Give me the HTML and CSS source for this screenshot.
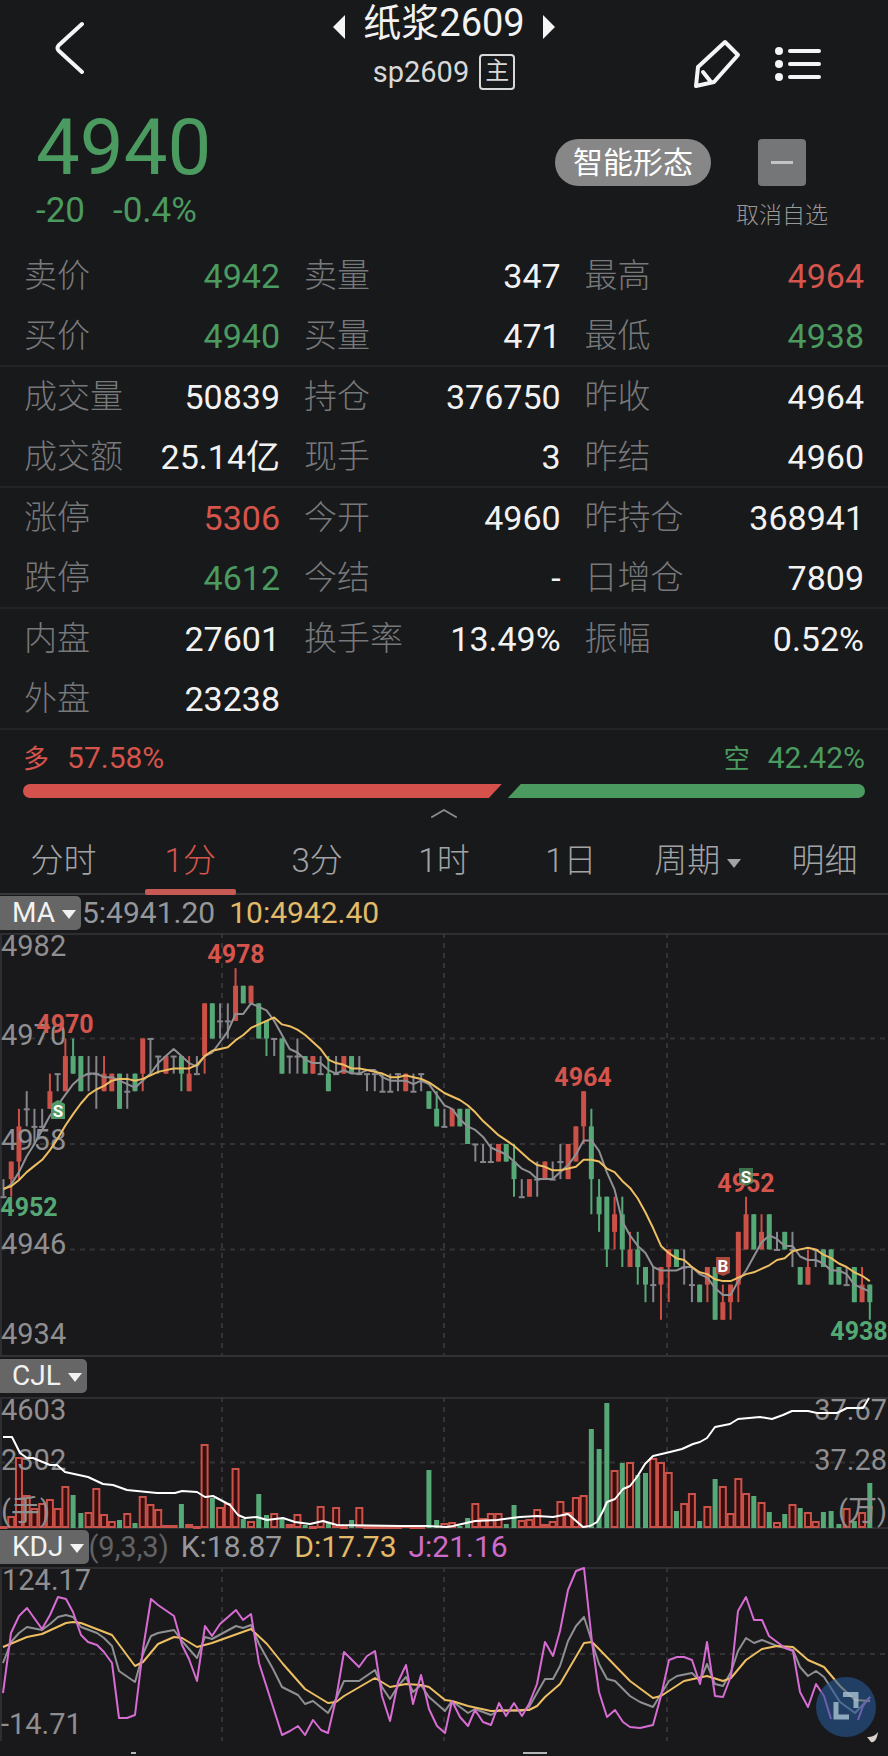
FILE: index.html
```html
<!DOCTYPE html>
<html lang="zh-CN">

<head>
	<meta charset="UTF-8">
	<meta name="viewport" content="width=device-width, initial-scale=1">
	<title>纸浆2609</title>
	<link rel="stylesheet" href="styles.css">
</head>

<body>
	<header class="topbar">
		<button class="icon-btn back" type="button" aria-label="返回">
			<svg width="30" height="54" viewBox="0 0 30 54"><path d="M27 3 3.500 24.500Q1.500 27 3.500 29.500L27 51" /></svg>
		</button>
		<div class="heading">
			<div class="heading-row">
				<button class="icon-btn" type="button" aria-label="上一个"><svg class="solid" width="12" height="24" viewBox="0 0 12 24"><path d="M12 0v24L0 12z" /></svg></button>
				<h1>纸浆2609</h1>
				<button class="icon-btn" type="button" aria-label="下一个"><svg class="solid" width="12" height="24" viewBox="0 0 12 24"><path d="M0 0v24l12-12z" /></svg></button>
			</div>
			<div class="code">sp2609 <span class="main-tag">主</span></div>
		</div>
		<div class="tools">
			<button class="icon-btn" type="button" aria-label="画线">
				<svg width="48" height="50" viewBox="0 0 48 50"><path d="M32 3 45 16 21 43 3 47 5 28zM10 33l8 10" /></svg>
			</button>
			<button class="icon-btn" type="button" aria-label="列表">
				<svg width="46" height="36" viewBox="0 0 46 36"><path d="M15 5h29M15 18h29M15 31h29" /><g class="dots"><circle cx="4" cy="5" r="4" /><circle cx="4" cy="18" r="4" /><circle cx="4" cy="31" r="4" /></g></svg>
			</button>
		</div>
	</header>

	<section class="quote">
		<div>
			<div class="price">4940</div>
			<div class="change"><span>-20</span><span>-0.4%</span></div>
		</div>
		<div class="quote-actions">
			<button class="pill" type="button">智能形态</button>
			<button class="watch" type="button"><span class="watch-box"></span>取消自选</button>
		</div>
	</section>

	<table class="stats">
		<colgroup>
			<col class="c1"><col class="c2"><col class="c3"><col class="c4"><col class="c5"><col class="c6">
		</colgroup>
		<tbody>
			<tr><th>卖价</th><td class="down">4942</td><th>卖量</th><td>347</td><th>最高</th><td class="up">4964</td></tr>
			<tr><th>买价</th><td class="down">4940</td><th>买量</th><td>471</td><th>最低</th><td class="down">4938</td></tr>
		</tbody>
		<tbody>
			<tr><th>成交量</th><td>50839</td><th>持仓</th><td>376750</td><th>昨收</th><td>4964</td></tr>
			<tr><th>成交额</th><td>25.14亿</td><th>现手</th><td>3</td><th>昨结</th><td>4960</td></tr>
		</tbody>
		<tbody>
			<tr><th>涨停</th><td class="up">5306</td><th>今开</th><td>4960</td><th>昨持仓</th><td>368941</td></tr>
			<tr><th>跌停</th><td class="down">4612</td><th>今结</th><td>-</td><th>日增仓</th><td>7809</td></tr>
		</tbody>
		<tbody>
			<tr><th>内盘</th><td>27601</td><th>换手率</th><td>13.49%</td><th>振幅</th><td>0.52%</td></tr>
			<tr><th>外盘</th><td>23238</td><td colspan="4"></td></tr>
		</tbody>
	</table>

	<section class="ratio">
		<div class="ratio-text">
			<div class="up"><span class="side">多</span>57.58%</div>
			<div class="down"><span class="side">空</span>42.42%</div>
		</div>
		<div class="ratio-bar">
			<div class="long" style="width:57.58%"></div>
			<div class="short" style="width:42.42%"></div>
		</div>
		<button class="icon-btn fold" type="button" aria-label="收起">
			<svg width="26" height="10" viewBox="0 0 26 10"><path d="M1 9 13 2l12 7" /></svg>
		</button>
	</section>

	<nav class="tabs">
		<button type="button">分时</button>
		<button type="button" class="active">1分</button>
		<button type="button">3分</button>
		<button type="button">1时</button>
		<button type="button">1日</button>
		<button type="button">周期<i class="caret"></i></button>
		<button type="button">明细</button>
	</nav>

	<main class="charts">
		<div class="legend">
			<button class="indicator" type="button">MA<i class="caret"></i></button>
			<span class="k">5:4941.20</span>
			<span class="d">10:4942.40</span>
		</div>
		<svg class="chart" viewBox="0 0 888 422" role="img" aria-label="K线">
			<path class="frame" d="M0 1H888M1 0V422" />
			<path class="grid" d="M0 105.500H888M0 211H888M0 316.500H888M222 0V422M444 0V422M667 0V422" />
			<g id="candles"></g>
			<g class="axis">
				<text x="1" y="23">4982</text>
				<text x="1" y="112">4970</text>
				<text x="1" y="217">4958</text>
				<text x="1" y="321">4946</text>
				<text x="1" y="411">4934</text>
			</g>
			<polyline id="ma5" class="line k-line" />
			<polyline id="ma10" class="line d-line" />
			<g class="mark up">
				<text x="236" y="30">4978</text>
				<text x="65" y="100">4970</text>
				<text x="583" y="153">4964</text>
				<text x="746" y="259">4952</text>
			</g>
			<g class="mark down">
				<text x="29" y="283">4952</text>
				<text x="859" y="407">4938</text>
			</g>
			<g class="trade">
				<path class="sell" d="M51 171 58 167l7 4v15H51z" />
				<text x="58" y="184">S</text>
				<path class="buy" d="M716 324h14v16l-7 3-7-3z" />
				<text x="723" y="339">B</text>
				<path class="sell dim" d="M739 235h14v15l-7 3-7-3z" />
				<text x="746" y="250">S</text>
			</g>
		</svg>

		<div class="legend legend-vol">
			<button class="indicator" type="button">CJL<i class="caret"></i></button>
		</div>
		<svg class="chart" viewBox="0 0 888 132" role="img" aria-label="成交量">
			<path class="frame" d="M0 1H888M1 0V132M0 131H888" />
			<path class="grid" d="M0 65.500H888M222 0V132M444 0V132M667 0V132" />
			<g id="volume"></g>
			<g class="axis">
				<text x="1" y="23">4603</text>
				<text x="1" y="73">2302</text>
				<text x="1" y="124">(手)</text>
				<text class="end" x="887" y="23">37.67</text>
				<text class="end" x="887" y="73">37.28</text>
				<text class="end" x="887" y="124">(万)</text>
			</g>
			<polyline class="line w-line" points="3,40 12,40 20,56 27,61 33,61 50,68 57,68 65,75 88,80 103,87 113,88 127,93 157,96 175,96 182,94 197,95 205,100 213,99 230,108 238,118 245,121 257,120 267,123 283,121 295,125 310,127 323,124 337,128 400,129 427,129 447,130 453,129 475,124 497,123 520,120 537,119 553,120 568,117 575,123 583,130 590,129 597,125 603,114 607,105 615,102 623,92 630,89 637,80 645,67 653,59 670,55 682,52 693,47 700,45 707,41 715,30 730,27 738,22 760,20 772,22 783,18 792,14 808,14 817,16 837,16 847,11 863,11 869,1" />
		</svg>

		<div class="legend legend-kdj">
			<button class="indicator" type="button">KDJ<i class="caret"></i></button>
			<span class="args">(9,3,3)</span>
			<span class="k">K:18.87</span>
			<span class="d">D:17.73</span>
			<span class="j">J:21.16</span>
		</div>
		<div class="last">
			<svg class="chart" viewBox="0 0 888 187" role="img" aria-label="KDJ">
				<path class="frame" d="M0 1H888M1 0V174" />
				<path class="grid" d="M0 87H888M222 0V174M444 0V174M667 0V174" />
				<g class="axis">
					<text x="2" y="23">124.17</text>
					<text x="1" y="167">-14.71</text>
				</g>
				<polyline class="line k-line" points="3,96 11,75 19,66 27,60 42,63 50,57 58,50 66,48 73,50 81,60 97,66 104,71 112,79 119,104 135,115 143,87 151,69 158,66 174,63 182,74 197,91 205,70 212,72 236,59 243,61 251,58 259,77 273,102 282,120 298,128 305,137 313,134 328,146 336,132 344,114 359,114 375,103 382,120 390,132 398,119 406,110 413,125 421,118 429,130 445,144 452,134 468,146 475,142 491,148 499,143 522,144 529,140 545,112 553,112 560,99 568,74 576,59 584,50 592,75 599,97 607,112 615,114 630,129 640,135 653,140 669,114 677,109 692,106 700,114 707,97 715,117 723,119 731,105 738,84 746,71 754,76 762,73 777,79 793,83 800,100 808,109 816,104 824,110 840,135 855,146 870,130" />
				<polyline class="line d-line" points="3,80 27,70 42,67 66,56 73,55 81,56 112,68 135,99 143,95 158,77 174,70 182,71 197,80 212,76 251,62 267,77 283,97 305,122 328,136 336,135 344,129 375,111 390,120 406,117 421,118 429,120 445,133 452,134 468,139 491,144 522,143 529,143 537,139 545,130 560,117 584,76 592,75 599,82 630,114 653,131 661,129 684,114 707,109 723,114 731,111 746,93 762,82 777,79 793,80 808,93 824,100 840,119 855,133 870,134" />
				<polyline class="line j-line" points="3,126 11,66 19,49 27,41 42,62 50,48 58,30 66,32 73,45 81,68 88,75 97,78 104,85 112,96 119,151 127,151 135,148 143,82 151,32 158,38 174,49 182,78 189,92 197,114 205,59 212,69 220,57 236,43 243,53 251,47 259,96 282,168 290,164 298,159 305,168 313,153 321,163 328,166 336,132 344,85 359,100 367,89 375,84 382,129 390,154 398,115 406,98 413,137 421,108 429,142 437,159 445,166 452,134 460,150 468,159 475,143 483,155 491,158 499,136 506,149 514,136 522,149 529,137 537,117 545,75 553,89 560,64 568,23 576,4 584,1 592,75 599,125 607,150 615,143 623,155 630,160 640,161 653,158 661,129 669,93 677,90 684,90 692,93 700,117 707,75 715,129 723,130 731,109 738,44 746,30 754,53 762,53 769,69 777,75 785,81 793,84 800,125 808,140 816,117 824,129 831,152" />
				<polyline class="line j-line" points="858,153 863,139 870,130" />
				<path class="edge" d="M131 186h5M523 186h24" />
				<path class="fleck" d="M867 170c5 0 8-1 11-5-1 8-4 11-7 10z" />
			</svg>
			<button class="rotate" type="button" aria-label="横屏">
				<svg width="60" height="60" viewBox="0 0 60 60"><path d="M20 25V40H33M27 17.500H40V31" /></svg>
			</button>
		</div>
	</main>
	<script src="chart.js"></script>
</body>

</html>
```
FILE: styles.css
```css
* {
	box-sizing: border-box;
}

body {
	margin: 0;
	background-color: #18191b;
	color: #f2f2f2;
	font-family: Roboto, "Noto Sans CJK SC", sans-serif;
}

button {
	margin: 0;
	padding: 0;
	border: 0;
	background: none;
	color: inherit;
	font-family: inherit;
	cursor: pointer;
}

svg {
	display: block;
}

.up {
	color: #d5544c;
	fill: #d5544c;
}

.down {
	color: #4b9a5f;
	fill: #55a873;
}

.icon-btn svg {
	fill: none;
	stroke: #f5f5f5;
	stroke-width: 4;
	stroke-linecap: round;
	stroke-linejoin: round;
}

.icon-btn .solid,
.icon-btn .dots {
	fill: #f5f5f5;
	stroke: none;
}

/* header */

.topbar {
	display: grid;
	grid-template-columns: 1fr auto 1fr;
	height: 96px;
	padding: 0 55px;
}

.back {
	justify-self: start;
}

.heading {
	text-align: center;
}

.heading-row {
	display: flex;
	justify-content: center;
	align-items: center;
	gap: 18px;
}

.heading-row svg {
	margin-top: 8px;
}

h1 {
	margin: 0;
	font-size: 38px;
	font-weight: 400;
	line-height: 46px;
}

.code {
	display: flex;
	justify-content: center;
	align-items: center;
	gap: 10px;
	margin-top: 8px;
	color: #d8d8d8;
	font-size: 29px;
	line-height: 36px;
}

.main-tag {
	width: 36px;
	height: 36px;
	border: 2px solid #d8d8d8;
	border-radius: 4px;
	font-size: 24px;
	line-height: 30px;
}

.tools {
	display: flex;
	justify-content: flex-end;
	align-items: center;
	gap: 34px;
	padding: 32px 12px 0 0;
}

/* last price */

.quote {
	display: flex;
	justify-content: space-between;
	padding: 12px 60px 15px 36px;
}

.price {
	color: #4b9a5f;
	font-size: 78px;
	line-height: 80px;
}

.change {
	display: flex;
	gap: 28px;
	margin-top: 2px;
	color: #4b9a5f;
	font-size: 35px;
	line-height: 41px;
}

.quote-actions {
	display: flex;
	align-items: flex-start;
	gap: 25px;
	padding-top: 31px;
}

.pill {
	padding: 0 18px;
	border-radius: 24px;
	background-color: #878787;
	color: #fff;
	font-size: 30px;
	line-height: 47px;
}

.watch {
	color: #989898;
	font-size: 23px;
	font-weight: 300;
	line-height: 30px;
}

.watch-box {
	display: flex;
	justify-content: center;
	align-items: center;
	width: 48px;
	height: 47px;
	margin: 0 auto 15px;
	border-radius: 4px;
	background-color: #757678;
}

.watch-box::before {
	content: "";
	width: 22px;
	height: 3px;
	background-color: #c4c4c4;
}

/* quote figures */

.stats {
	width: 100%;
	table-layout: fixed;
	border-spacing: 0;
}

.c1 { width: 15%; }
.c2 { width: 18%; }
.c3 { width: 14%; }
.c4 { width: 17.6%; }
.c5 { width: 14%; }
.c6 { width: 21.4%; }

.stats th,
.stats td {
	height: 60px;
	padding: 0 13px 0 11px;
	font-size: 33px;
	font-weight: 400;
	line-height: 40px;
	white-space: nowrap;
}

.stats th {
	color: #77787a;
	font-weight: 300;
	text-align: left;
}

.stats td {
	font-size: 34px;
	text-align: right;
}

.stats tr:last-child > * {
	height: 61px;
	border-bottom: 2px solid #232426;
}

.stats th:first-child {
	padding-left: 24px;
}

.stats td:last-child {
	padding-right: 24px;
}

/* long / short */

.ratio {
	padding: 8px 23px 0;
}

.ratio-text {
	display: flex;
	justify-content: space-between;
	font-size: 30px;
	line-height: 40px;
}

.side {
	margin-right: 18px;
	font-size: 26px;
}

.ratio-bar {
	display: flex;
	margin-top: 5px;
}

.long,
.short {
	height: 14px;
}

.long {
	border-radius: 7px 0 0 7px;
	background-color: #d5524c;
	clip-path: polygon(0 0, calc(100% - 6px) 0, calc(100% - 19px) 100%, 0 100%);
}

.short {
	border-radius: 0 7px 7px 0;
	background-color: #4b9a5f;
	clip-path: polygon(13px 0, 100% 0, 100% 100%, 0 100%);
}

.fold {
	display: block;
	margin: 0 auto;
	padding: 10px 0;
}

.icon-btn.fold svg {
	stroke: #8a8a8a;
	stroke-width: 2;
}

/* periods */

.tabs {
	display: grid;
	grid-template-columns: repeat(7, 1fr);
	border-bottom: 2px solid #37383a;
}

.tabs button {
	position: relative;
	color: #a2a3a5;
	font-size: 33px;
	font-weight: 300;
	line-height: 65px;
	white-space: nowrap;
}

.tabs .active {
	color: #d5544c;
}

.tabs .active::after {
	content: "";
	position: absolute;
	left: 18px;
	right: 18px;
	bottom: -2px;
	height: 6px;
	border-radius: 2px;
	background-color: #c85a56;
}

.caret {
	display: inline-block;
	margin-left: 7px;
	border: 7px solid transparent;
	border-top: 9px solid currentColor;
	border-bottom: 0;
	vertical-align: middle;
}

/* charts */

.charts {
	background-color: #19191b;
}

.legend {
	display: flex;
	align-items: center;
	gap: 14px;
	height: 38px;
	padding-bottom: 3px;
	font-size: 30px;
	line-height: 34px;
}

.legend-vol {
	height: 42px;
	border-top: 2px solid #323234;
}

.legend-kdj {
	gap: 12px;
}

.indicator {
	padding: 0 5px 0 12px;
	border-radius: 0 5px 5px 0;
	background-color: #666;
	color: #f2f2f2;
	font-size: 28px;
	line-height: 34px;
}

.indicator + span {
	margin-left: -13px;
}

.k {
	color: #96979a;
}

.d {
	color: #e2ba68;
}

.j {
	color: #cf6bcb;
}

.args {
	color: #626264;
	font-size: 29px;
}

.chart {
	width: 100%;
	height: auto;
}

.frame {
	fill: none;
	stroke: #2e2e30;
	stroke-width: 2;
}

.grid {
	fill: none;
	stroke: #333335;
	stroke-width: 2;
	stroke-dasharray: 5 5;
}

.axis {
	fill: #8f8f91;
	font-size: 29px;
}

.end {
	text-anchor: end;
}

.line {
	fill: none;
	stroke-width: 2;
	stroke-linejoin: round;
}

.k-line {
	stroke: #8f9094;
}

.d-line {
	stroke: #eebe62;
}

.j-line {
	stroke: #d76cd2;
}

.line.w-line {
	stroke: #fff;
}

.mark {
	font-size: 25px;
	font-weight: 700;
	text-anchor: middle;
}

.trade {
	fill: #fff;
	font-size: 17px;
	font-weight: 700;
	text-anchor: middle;
}

.sell {
	fill: #4f9a67;
}

.buy {
	fill: #a8493c;
}

.dim {
	opacity: 0.7;
}

.rise {
	fill: #cb5047;
}

.fall {
	fill: #57a877;
}

.flat {
	fill: #85858c;
}

.rise-box {
	fill: #3a0e0d;
	stroke: #c9524a;
	stroke-width: 2;
}

.edge {
	stroke: #b5b5b5;
	stroke-width: 2;
}

.fleck {
	fill: #d8d2cc;
}

.last {
	position: relative;
}

.rotate {
	position: absolute;
	right: 12px;
	bottom: 17px;
	border-radius: 50%;
	background-color: rgba(38, 88, 150, 0.6);
}

.rotate path {
	fill: none;
	stroke: rgba(170, 195, 210, 0.8);
	stroke-width: 5;
}
```
FILE: chart.js
```js
// r = up, g = down, n = unchanged; then high, low, body top, body bottom (4900 + value)
const candles = `n 54 52 52 52;r 56 52 56 54;r 62 54 60 56;n 64 60 62 62;n 62 58 60 60;n 62 60 60 60;r 66 62 64 62;n 66 64 66 66;r 70 64 68 64;g 70 66 68 66
g 68 64 68 64;n 68 64 66 66;n 68 62 66 66;r 68 64 66 64;r 66 64 66 64;g 66 62 66 62;n 66 62 64 64;g 66 64 66 64;r 70 64 70 66;n 70 66 70 70
n 68 66 68 68;r 68 66 68 66;n 68 66 68 68;g 68 64 68 66;r 68 64 66 64;n 68 66 66 66;r 74 66 74 68;g 74 70 74 70;n 74 70 72 72;n 74 70 72 72
r 78 72 76 72;g 76 74 76 74;r 76 74 76 74;g 74 70 74 70;g 72 68 72 70;n 70 68 70 70;g 70 66 70 66;n 68 66 68 68;n 70 66 68 68;g 68 66 68 66
r 68 66 68 66;n 68 66 66 66;g 68 64 66 64;n 68 66 66 66;r 68 66 68 66;g 68 66 68 66;n 68 66 66 66;n 66 64 66 66;n 66 64 66 66;n 66 64 64 64
n 66 64 64 64;n 66 64 66 66;r 66 64 66 64;n 66 64 64 64;n 66 64 66 66;g 64 62 64 62;g 64 60 62 60;n 62 60 60 60;r 62 60 62 60;g 62 60 62 60
g 62 58 62 58;n 58 56 58 58;n 58 56 56 56;n 58 56 56 56;r 58 56 58 56;g 58 56 58 56;g 58 52 56 54;n 54 52 52 52;r 54 52 54 52;n 56 52 54 54
r 56 54 56 54;n 56 54 54 54;n 58 54 56 56;r 58 54 58 54;r 60 56 60 56;r 64 58 64 60;g 62 50 60 54;g 54 48 52 50;g 52 44 52 46;r 52 46 50 48
g 52 44 50 46;r 48 44 46 44;g 48 42 46 44;g 44 40 44 42;n 44 40 42 42;r 44 38 44 42;r 46 40 46 44;g 46 44 46 44;n 46 42 44 44;n 44 40 42 42
g 42 40 42 40;r 44 40 44 42;g 44 38 44 38;r 42 38 40 38;r 42 38 42 40;r 48 40 48 42;r 52 46 50 46;g 50 46 50 46;r 50 46 48 46;g 50 46 50 46
n 48 46 46 46;g 48 46 48 46;n 48 44 46 46;g 44 42 44 42;r 46 42 44 42;n 46 44 46 46;g 46 44 46 44;g 46 42 46 42;g 44 42 44 42;n 44 42 42 42
g 44 40 44 40;r 44 40 42 40;g 42 38 42 40`.split(/[;\n]/).map(function (row) {
	const p = row.split(' ');
	return { dir: p[0], high: +p[1], low: +p[2], top: +p[3], bottom: +p[4] };
});

const volumes = [
	2, 12, 71, 33, 20, 25, 29, 20, 42, 33, 15, 16, 40, 14, 7, 8, 15, 5, 32, 24,
	19, 3, 3, 24, 4, 2, 84, 30, 21, 25, 60, 9, 7, 34, 13, 15, 9, 4, 14, 3,
	2, 22, 5, 21, 2, 8, 21, 2, 2, 2, 2, 2, 3, 2, 2, 58, 8, 5, 6, 2,
	10, 25, 10, 15, 15, 4, 23, 8, 9, 19, 4, 7, 27, 16, 31, 33, 99, 79, 125, 58,
	65, 66, 53, 55, 70, 66, 56, 17, 25, 35, 7, 22, 49, 42, 15, 50, 35, 32, 26, 16,
	6, 14, 24, 20, 16, 7, 16, 17, 4, 20, 7, 16, 45
];

const names = { r: 'rise', g: 'fall', n: 'flat' };

function x(i) {
	return 3.5 + i * 7.735;
}

function y(price) {
	return (82 - price) * 8.79;
}

function rect(parent, cls, left, top, width, height) {
	const el = document.createElementNS('http://www.w3.org/2000/svg', 'rect');
	el.setAttribute('class', cls);
	el.setAttribute('x', left);
	el.setAttribute('y', top);
	el.setAttribute('width', width);
	el.setAttribute('height', height);
	parent.appendChild(el);
}

const candleLayer = document.getElementById('candles');
const volumeLayer = document.getElementById('volume');

candles.forEach(function (c, i) {
	const cls = names[c.dir];
	rect(candleLayer, cls, x(i) - 1, y(c.high), 2, y(c.low) - y(c.high));
	if (c.dir === 'n') {
		rect(candleLayer, cls, x(i) - 3, y(c.top) - 0.5, 6, 2);
	} else {
		rect(candleLayer, cls, x(i) - 2.5, y(c.top), 5, y(c.bottom) - y(c.top));
	}

	const h = volumes[i];
	if (c.dir === 'g') {
		rect(volumeLayer, cls, x(i) - 2.5, 131 - h, 5, h);
	} else {
		rect(volumeLayer, 'rise-box', x(i) - 3, 132 - h, 6, Math.max(h - 2, 1));
	}
});

function average(id, days) {
	const closes = Array(days - 1).fill(53).concat(candles.map(function (c) {
		return c.dir === 'r' ? c.top : c.bottom;
	}));
	const points = candles.map(function (c, i) {
		const sum = closes.slice(i, i + days).reduce(function (a, b) { return a + b; }, 0);
		return x(i).toFixed(1) + ',' + y(sum / days).toFixed(1);
	});
	document.getElementById(id).setAttribute('points', points.join(' '));
}

average('ma5', 5);
average('ma10', 10);
```
